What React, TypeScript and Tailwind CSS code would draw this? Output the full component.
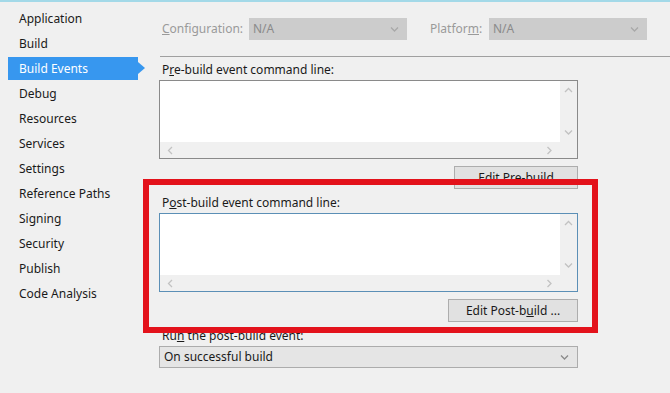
import React from 'react';

const font = { fontFamily: '"Noto Sans", "Open Sans", sans-serif' };

const navItems = [
  'Application',
  'Build',
  'Build Events',
  'Debug',
  'Resources',
  'Services',
  'Settings',
  'Reference Paths',
  'Signing',
  'Security',
  'Publish',
  'Code Analysis',
];

const Chevron: React.FC<{ dir: 'up' | 'down' | 'left' | 'right'; color?: string }> = ({ dir, color = '#c2c2c2' }) => {
  const points = {
    up: '1,5 4.5,1.5 8,5',
    down: '1,1.5 4.5,5 8,1.5',
    left: '5,1 1.5,4.5 5,8',
    right: '1.5,1 5,4.5 1.5,8',
  }[dir];
  const vertical = dir === 'up' || dir === 'down';
  return (
    <svg width={vertical ? 9 : 7} height={vertical ? 7 : 9} viewBox={vertical ? '0 0 9 7' : '0 0 7 9'}>
      <polyline points={points} fill="none" stroke={color} strokeWidth="1.3" />
    </svg>
  );
};

// Multi-line text box with both scrollbars
const CommandBox: React.FC<{ focused?: boolean }> = ({ focused }) => (
  <div
    className={`w-[419px] h-[79px] border flex flex-col ${
      focused ? 'border-[#5b8fb6]' : 'border-[#8a8a8a]'
    }`}
  >
    <div className="flex flex-1">
      <div className="flex-1 bg-white" />
      <div className="w-[17px] bg-[#f0f0f0] flex flex-col items-center justify-between pt-[6px] pb-[6px]">
        <Chevron dir="up" />
        <Chevron dir="down" />
      </div>
    </div>
    <div className="h-[16px] flex">
      <div className="flex-1 bg-[#f0f0f0] flex items-center justify-between px-[7px]">
        <Chevron dir="left" />
        <Chevron dir="right" />
      </div>
      <div className="w-[17px] bg-[#f0f0f0]" />
    </div>
  </div>
);

const Button: React.FC<{ width: string; children: React.ReactNode }> = ({ width, children }) => (
  <div className="flex justify-end w-[419px]">
    <div
      className={`${width} h-[23px] bg-[#e1e1e1] border border-[#adadad] flex items-center justify-center text-[12px] text-[#1a1a1a]`}
    >
      {children}
    </div>
  </div>
);

const Label: React.FC<{ children: React.ReactNode }> = ({ children }) => (
  <div className="h-[16px] leading-[16px] pl-[3px] text-[12px] text-[#1a1a1a]">{children}</div>
);

const App: React.FC = () => {
  return (
    <div className="relative w-[670px] h-[393px] bg-[#f0f0f0] overflow-hidden" style={font}>
      <div className="h-[2px] bg-[#a3d9e8]" />

      <div className="flex">
        {/* Sidebar */}
        <div className="w-[150px] pt-[4px]">
          {navItems.map((item) => {
            const active = item === 'Build Events';
            return (
              <div key={item} className="h-[25px] flex items-center">
                {active ? (
                  <div className="relative ml-[8px] w-[130px] h-[23px] bg-[#3797ef] text-white text-[12px] flex items-center pl-[11px]">
                    {item}
                    <div className="absolute right-[-7px] top-[5px] w-0 h-0 border-t-[6px] border-b-[6px] border-l-[7px] border-t-transparent border-b-transparent border-l-[#3797ef]" />
                  </div>
                ) : (
                  <div className="pl-[19px] text-[12px] text-[#1a1a1a]">{item}</div>
                )}
              </div>
            );
          })}
        </div>

        {/* Main */}
        <div className="flex-1 pl-[9px]">
          <div className="mt-[16px] flex items-center h-[22px] text-[12px] text-[#9a9a9a]">
            <div className="w-[90px] pl-[3px]">
              <span className="underline">C</span>onfiguration:
            </div>
            <div className="w-[158px] h-[22px] bg-[#cccccc] flex items-center justify-between pl-[4px] pr-[8px]">
              <span className="text-[#8a8a8a]">N/A</span>
              <Chevron dir="down" color="#a8a8a8" />
            </div>
            <div className="w-[59px] ml-[23px]">
              Platfor<span className="underline">m</span>:
            </div>
            <div className="w-[158px] h-[22px] bg-[#cccccc] flex items-center justify-between pl-[4px] pr-[8px]">
              <span className="text-[#8a8a8a]">N/A</span>
              <Chevron dir="down" color="#a8a8a8" />
            </div>
          </div>

          <div className="mt-[16px] ml-[1px] h-[1px] bg-[#a0a0a0]" />

          <div className="mt-[5px]">
            <Label>
              P<span className="underline">r</span>e-build event command line:
            </Label>
          </div>
          <div className="mt-[2px]">
            <CommandBox />
          </div>
          <div className="mt-[7px]">
            <Button width="w-[124px]">Edit Pre-build</Button>
          </div>

          <div className="mt-[6px]">
            <Label>
              P<span className="underline">o</span>st-build event command line:
            </Label>
          </div>
          <div className="mt-[2px]">
            <CommandBox focused />
          </div>
          <div className="mt-[7px]">
            <Button width="w-[130px]">
              Edit Post-b<span className="underline">u</span>ild ...
            </Button>
          </div>

          <div className="mt-[6px]">
            <Label>
              Ru<span className="underline">n</span> the post-build event:
            </Label>
          </div>
          <div className="mt-[2px] w-[419px] h-[22px] bg-[#e5e5e5] border border-[#acacac] flex items-center justify-between pl-[4px] pr-[8px] text-[12px] text-[#1a1a1a]">
            <span>On successful build</span>
            <Chevron dir="down" color="#8a8a8a" />
          </div>
        </div>
      </div>

      {/* Red highlight annotation */}
      <div className="absolute left-[143px] top-[179px] w-[455px] h-[154px] border-[6px] border-[#e3121b]" />
    </div>
  );
};

export default App;
